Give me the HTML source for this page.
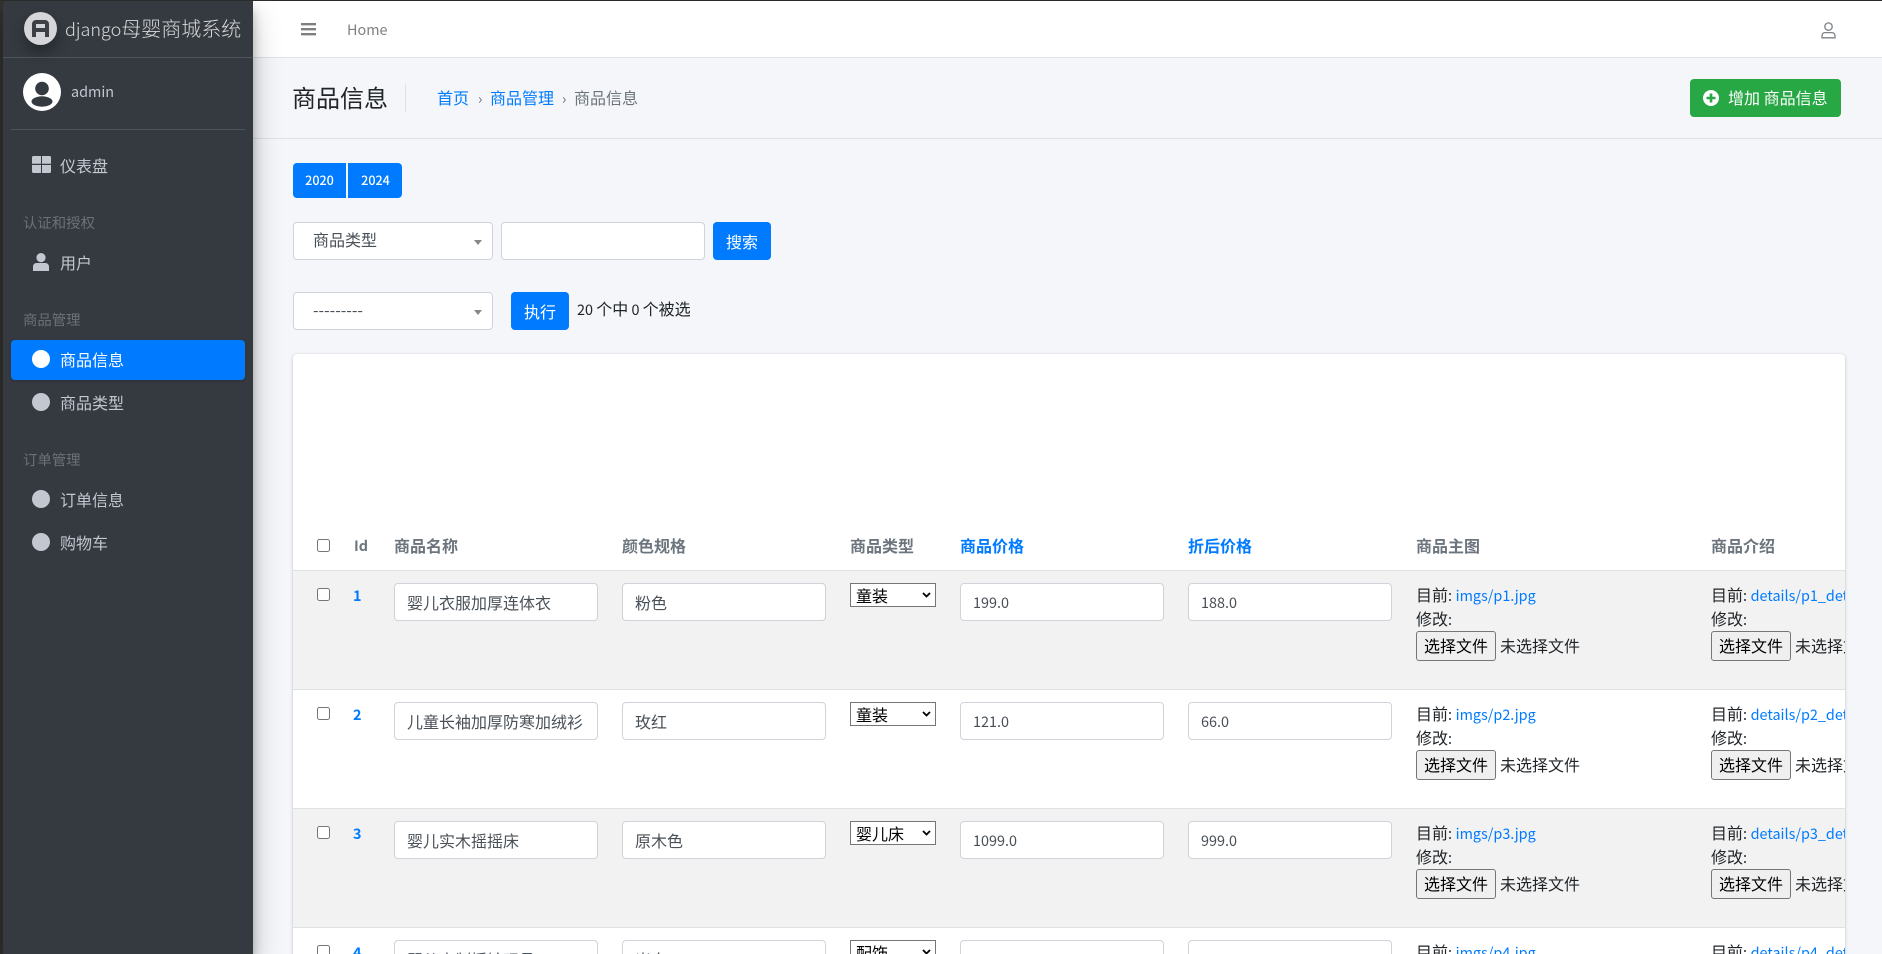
<!DOCTYPE html>
<html lang="zh-CN">
<head>
<meta charset="utf-8">
<title>商品信息</title>
<style>
*{box-sizing:border-box}
html,body{margin:0;padding:0;width:1882px;height:954px;overflow:hidden;background:#f4f6f9}
body{position:relative;font-family:"Noto Sans CJK SC","Liberation Sans",sans-serif;font-size:16px;color:#212529}
a{color:#007bff;text-decoration:none}
.t{position:absolute;white-space:nowrap;line-height:24px;height:24px}
.l{font-size:14.4px}
#strip{position:absolute;left:0;top:0;width:20px;height:954px;background:#33332f}
#topline{position:absolute;left:0;top:0;width:1882px;height:1px;background:#2b2b2b;z-index:6}
#side{position:absolute;left:3px;top:0;width:250px;height:954px;background:#343a40;border-top-left-radius:5px;box-shadow:0 14px 28px rgba(0,0,0,.25),0 10px 10px rgba(0,0,0,.22);z-index:5}
#side .t{color:#c2c7d0}
#side .h{color:#6c7077;font-size:14.4px}
.hr{position:absolute;height:1px;background:#4b545c}
.dot{position:absolute;width:18px;height:18px;border-radius:50%;background:#c2c7d0;left:29px}
#act{position:absolute;left:8px;top:340px;width:234px;height:40px;background:#007bff;border-radius:4px;box-shadow:0 1px 3px rgba(0,0,0,.2)}
#nav{position:absolute;left:253px;top:1px;width:1629px;height:57px;background:#fff;border-bottom:1px solid #dee2e6}
#head{position:absolute;left:253px;top:138px;width:1629px;height:1px;background:#dee2e6}
.btn{position:absolute;background:#007bff;color:#fff;border-radius:4px;text-align:center}
.sel{position:absolute;left:293px;width:200px;height:38px;background:#fff;border:1px solid #ced4da;border-radius:4px;color:#495057;padding-left:19px;line-height:32px}
.sel i{position:absolute;left:180px;top:17px;width:0;height:0;border-left:4px solid transparent;border-right:4px solid transparent;border-top:5px solid #888}
#card{position:absolute;left:293px;top:354px;width:1552px;height:620px;background:#fff;border-radius:4px;box-shadow:0 0 1px rgba(0,0,0,.125),0 1px 3px rgba(0,0,0,.2);overflow:hidden}
.th{position:absolute;top:179px;white-space:nowrap;font-weight:700;color:#6c757d;line-height:24px}
.th.b{color:#007bff}
.line{position:absolute;left:0;width:1552px;height:1px;background:#dee2e6}
.row{position:absolute;left:0;width:1552px;height:119px}
.row.o{background:#f2f2f2}
.row input[type=checkbox]{position:absolute;left:24px;top:18px;margin:0;width:13px;height:13px}
.id{position:absolute;left:60px;top:14px;font-weight:700;font-size:14.4px;color:#007bff;line-height:24px}
.in{position:absolute;top:13px;height:38px;background:#fff;border:1px solid #ced4da;border-radius:4px;color:#495057;font:16px/36px "Noto Sans CJK SC",sans-serif;padding:0 12px;white-space:nowrap;overflow:hidden}
.in.num{font-size:14.4px;line-height:38px}
.s{position:absolute;left:557px;top:13px;width:86px;height:24px;color:#000;background:#fff;border:1px solid #767676;padding-left:5px;line-height:22px;white-space:nowrap}
.s svg{position:absolute;left:71px;top:8px}
.f{position:absolute;white-space:nowrap;line-height:24px}
.fb{position:absolute;top:61px;width:80px;height:30px;background:#efefef;border:1px solid #767676;border-radius:3px;color:#000;font:16px/26px "Noto Sans CJK SC",sans-serif;text-align:center}
</style>
</head>
<body>
<div id="strip"></div>
<div id="topline"></div>

<div id="nav">
  <svg style="position:absolute;left:48px;top:22px" width="15" height="13" viewBox="0 0 15 13"><path d="M0 0h15v2.400H0zM0 5h15v2.400H0zM0 10h15v2.400H0z" fill="#7f7f7f"/></svg>
  <div class="t l" style="left:94px;top:17px;color:#7f7f7f">Home</div>
  <svg style="position:absolute;left:1568px;top:21px" width="15" height="17" viewBox="0 0 15 17" fill="none" stroke="#7c8287" stroke-width="1.3"><circle cx="7.5" cy="4.6" r="3.7"/><path d="M1 15.800h13v-2.200a3 3 0 0 0-3-3H4a3 3 0 0 0-3 3z"/></svg>
</div>

<div id="head"></div>
<div class="t" style="left:292px;top:80px;font-size:24px;line-height:34px;height:34px;color:#212529">商品信息</div>
<div style="position:absolute;left:405px;top:84px;width:1px;height:28px;background:#dee2e6"></div>
<a class="t" style="left:437px;top:85px">首页</a>
<div class="t l" style="left:478px;top:87px;color:#6c757d">›</div>
<a class="t" style="left:490px;top:85px">商品管理</a>
<div class="t l" style="left:562px;top:87px;color:#6c757d">›</div>
<div class="t" style="left:574px;top:85px;color:#6c757d">商品信息</div>

<div style="position:absolute;left:1690px;top:79px;width:151px;height:38px;background:#28a745;border-radius:4px"></div>
<svg style="position:absolute;left:1703px;top:90px" width="16" height="16" viewBox="0 0 16 16"><circle cx="8" cy="8" r="8" fill="#fff"/><path d="M6.700 3.500h2.600v3.200h3.200v2.600H9.300v3.200H6.700V9.300H3.500V6.700h3.200z" fill="#28a745"/></svg>
<div class="t" style="left:1728px;top:85px;color:#fff">增加 商品信息</div>

<div class="btn" style="left:293px;top:163px;width:53px;height:35px;border-radius:4px 0 0 4px;font-size:12.6px;font-weight:500;line-height:33px">2020</div>
<div class="btn" style="left:348px;top:163px;width:54px;height:35px;border-radius:0 4px 4px 0;font-size:12.6px;font-weight:500;line-height:33px;padding-left:1px">2024</div>

<div class="sel" style="top:222px">商品类型<i></i></div>
<div style="position:absolute;left:501px;top:222px;width:204px;height:38px;background:#fff;border:1px solid #ced4da;border-radius:4px"></div>
<div class="btn" style="left:713px;top:222px;width:58px;height:38px;line-height:38px">搜索</div>

<div class="sel" style="top:292px">---------<i></i></div>
<div class="btn" style="left:511px;top:292px;width:58px;height:38px;line-height:38px">执行</div>
<div class="t" style="left:577px;top:296px"><span class="l">20 </span>个中<span class="l"> 0 </span>个被选</div>

<div id="card">
  <input type="checkbox" style="position:absolute;left:24px;top:185px;margin:0;width:13px;height:13px">
  <div class="th" style="left:61px;top:180px;font-size:14.4px">Id</div>
  <div class="th" style="left:101px">商品名称</div>
  <div class="th" style="left:329px">颜色规格</div>
  <div class="th" style="left:557px">商品类型</div>
  <div class="th b" style="left:667px">商品价格</div>
  <div class="th b" style="left:895px">折后价格</div>
  <div class="th" style="left:1123px">商品主图</div>
  <div class="th" style="left:1418px">商品介绍</div>

  <div class="row o" style="top:216px">
    <input type="checkbox">
    <div class="id">1</div>
    <div class="in" style="left:101px;width:204px">婴儿衣服加厚连体衣</div>
    <div class="in" style="left:329px;width:204px">粉色</div>
    <div class="s">童装<svg width="9" height="6" viewBox="0 0 9 6"><path d="M1 1l3.500 3.500L8 1" fill="none" stroke="#000" stroke-width="1.800"/></svg></div>
    <div class="in num" style="left:667px;width:204px">199.0</div>
    <div class="in num" style="left:895px;width:204px">188.0</div>
    <div class="f" style="left:1123px;top:12px">目前<span class="l">:</span> <a class="l">imgs/p1.jpg</a></div>
    <div class="f" style="left:1123px;top:36px">修改<span class="l">:</span></div>
    <div class="fb" style="left:1123px">选择文件</div>
    <div class="f" style="left:1207px;top:63px">未选择文件</div>
    <div class="f" style="left:1418px;top:12px">目前<span class="l">:</span> <a class="l">details/p1_detail.jpg</a></div>
    <div class="f" style="left:1418px;top:36px">修改<span class="l">:</span></div>
    <div class="fb" style="left:1418px">选择文件</div>
    <div class="f" style="left:1502px;top:63px">未选择文件</div>
  </div>

  <div class="row" style="top:335px">
    <input type="checkbox">
    <div class="id">2</div>
    <div class="in" style="left:101px;width:204px">儿童长袖加厚防寒加绒衫</div>
    <div class="in" style="left:329px;width:204px">玫红</div>
    <div class="s">童装<svg width="9" height="6" viewBox="0 0 9 6"><path d="M1 1l3.500 3.500L8 1" fill="none" stroke="#000" stroke-width="1.800"/></svg></div>
    <div class="in num" style="left:667px;width:204px">121.0</div>
    <div class="in num" style="left:895px;width:204px">66.0</div>
    <div class="f" style="left:1123px;top:12px">目前<span class="l">:</span> <a class="l">imgs/p2.jpg</a></div>
    <div class="f" style="left:1123px;top:36px">修改<span class="l">:</span></div>
    <div class="fb" style="left:1123px">选择文件</div>
    <div class="f" style="left:1207px;top:63px">未选择文件</div>
    <div class="f" style="left:1418px;top:12px">目前<span class="l">:</span> <a class="l">details/p2_detail.jpg</a></div>
    <div class="f" style="left:1418px;top:36px">修改<span class="l">:</span></div>
    <div class="fb" style="left:1418px">选择文件</div>
    <div class="f" style="left:1502px;top:63px">未选择文件</div>
  </div>

  <div class="row o" style="top:454px">
    <input type="checkbox">
    <div class="id">3</div>
    <div class="in" style="left:101px;width:204px">婴儿实木摇摇床</div>
    <div class="in" style="left:329px;width:204px">原木色</div>
    <div class="s">婴儿床<svg width="9" height="6" viewBox="0 0 9 6"><path d="M1 1l3.500 3.500L8 1" fill="none" stroke="#000" stroke-width="1.800"/></svg></div>
    <div class="in num" style="left:667px;width:204px">1099.0</div>
    <div class="in num" style="left:895px;width:204px">999.0</div>
    <div class="f" style="left:1123px;top:12px">目前<span class="l">:</span> <a class="l">imgs/p3.jpg</a></div>
    <div class="f" style="left:1123px;top:36px">修改<span class="l">:</span></div>
    <div class="fb" style="left:1123px">选择文件</div>
    <div class="f" style="left:1207px;top:63px">未选择文件</div>
    <div class="f" style="left:1418px;top:12px">目前<span class="l">:</span> <a class="l">details/p3_detail.jpg</a></div>
    <div class="f" style="left:1418px;top:36px">修改<span class="l">:</span></div>
    <div class="fb" style="left:1418px">选择文件</div>
    <div class="f" style="left:1502px;top:63px">未选择文件</div>
  </div>

  <div class="row" style="top:573px">
    <input type="checkbox">
    <div class="id">4</div>
    <div class="in" style="left:101px;width:204px">婴儿木制摇铃玩具</div>
    <div class="in" style="left:329px;width:204px">米白</div>
    <div class="s">配饰<svg width="9" height="6" viewBox="0 0 9 6"><path d="M1 1l3.500 3.500L8 1" fill="none" stroke="#000" stroke-width="1.800"/></svg></div>
    <div class="in num" style="left:667px;width:204px"></div>
    <div class="in num" style="left:895px;width:204px"></div>
    <div class="f" style="left:1123px;top:12px">目前<span class="l">:</span> <a class="l">imgs/p4.jpg</a></div>
    <div class="f" style="left:1418px;top:12px">目前<span class="l">:</span> <a class="l">details/p4_detail.jpg</a></div>
  </div>

  <div class="line" style="top:216px"></div>
  <div class="line" style="top:335px"></div>
  <div class="line" style="top:454px"></div>
  <div class="line" style="top:573px"></div>
</div>

<div id="side">
  <div style="position:absolute;left:21px;top:12px;width:33px;height:33px;border-radius:50%;background:#d5d6d9;box-shadow:0 8px 14px rgba(0,0,0,.3)"></div>
  <svg style="position:absolute;left:29px;top:20px" width="17" height="17" viewBox="0 0 17 17"><path fill="#3d4146" fill-rule="evenodd" d="M4 0h9a4 4 0 0 1 4 4v13h-4v-5H4v5H0V4a4 4 0 0 1 4-4zM4 4v4h9V4z"/></svg>
  <div class="t" style="left:62px;top:14px;font-size:20px;line-height:28px;height:28px;font-weight:300;color:rgba(255,255,255,.8)"><span style="font-size:18px">django</span>母婴商城系统</div>
  <div class="hr" style="left:0;top:57px;width:250px"></div>

  <svg style="position:absolute;left:20px;top:73px" width="38" height="38" viewBox="0 0 38 38"><circle cx="19" cy="19" r="19" fill="#fff"/><circle cx="19" cy="15.500" r="6.800" fill="#343a40"/><ellipse cx="19" cy="28.500" rx="10.500" ry="5.200" fill="#343a40"/></svg>
  <div class="t l" style="left:68px;top:80px">admin</div>
  <div class="hr" style="left:8px;top:129px;width:234px"></div>

  <svg style="position:absolute;left:29px;top:156px" width="19" height="17" viewBox="0 0 19 17"><path fill="#c2c7d0" d="M0 1.500A1.500 1.500 0 0 1 1.500 0H9v7.800H0zM10 0h7.500A1.500 1.500 0 0 1 19 1.500v6.300H10zM0 9h9v8H1.500A1.500 1.500 0 0 1 0 15.500zM10 9h9v6.500a1.500 1.500 0 0 1-1.500 1.500H10z"/></svg>
  <div class="t" style="left:57px;top:153px">仪表盘</div>

  <div class="t h" style="left:20px;top:211px">认证和授权</div>
  <svg style="position:absolute;left:30px;top:253px" width="16" height="18" viewBox="0 0 16 18"><circle cx="8" cy="4.600" r="4.600" fill="#c2c7d0"/><path d="M3.500 10h9A3.500 3.500 0 0 1 16 13.500V18H0v-4.500A3.500 3.500 0 0 1 3.500 10z" fill="#c2c7d0"/></svg>
  <div class="t" style="left:57px;top:250px">用户</div>

  <div class="t h" style="left:20px;top:308px">商品管理</div>
  <div id="act"></div>
  <div class="dot" style="top:350px;background:#fff"></div>
  <div class="t" style="left:57px;top:347px;color:#fff">商品信息</div>
  <div class="dot" style="top:393px"></div>
  <div class="t" style="left:57px;top:390px">商品类型</div>

  <div class="t h" style="left:20px;top:448px">订单管理</div>
  <div class="dot" style="top:490px"></div>
  <div class="t" style="left:57px;top:487px">订单信息</div>
  <div class="dot" style="top:533px"></div>
  <div class="t" style="left:57px;top:530px">购物车</div>
</div>
</body>
</html>
